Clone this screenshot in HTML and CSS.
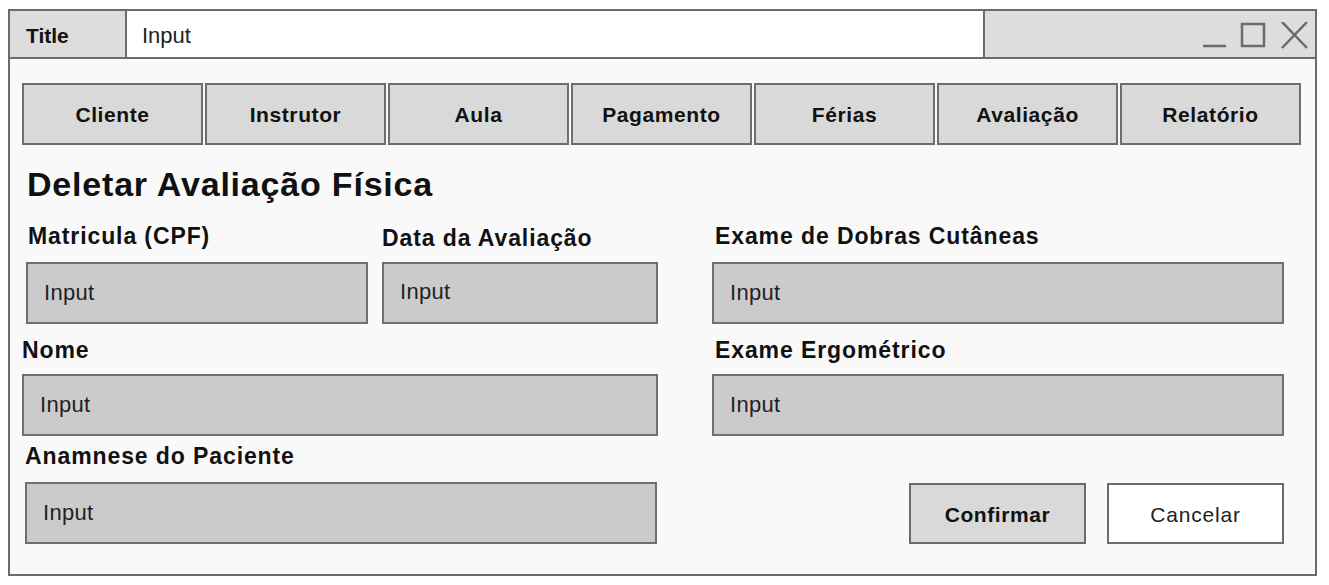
FILE: index.html
```html
<!DOCTYPE html>
<html lang="pt">
<head>
<meta charset="utf-8">
<title>Deletar Avaliação Física</title>
<link rel="stylesheet" href="styles.css">
</head>
<body>
<div class="window">
  <div class="titlebar">
    <div class="title-cell">Title</div>
    <div class="title-input">Input</div>
    <div class="title-controls">
      <svg class="controls-icon" width="110" height="30" viewBox="0 0 110 30">
        <line x1="3" y1="24" x2="26" y2="24" stroke="#6b6b6b" stroke-width="2.5"/>
        <rect x="42" y="2" width="22" height="22" fill="none" stroke="#6b6b6b" stroke-width="2.5"/>
        <line x1="82" y1="0" x2="107" y2="26" stroke="#6b6b6b" stroke-width="2.5"/>
        <line x1="107" y1="0" x2="82" y2="26" stroke="#6b6b6b" stroke-width="2.5"/>
      </svg>
    </div>
  </div>
  <div class="content">
    <nav class="tabs">
      <div class="tab">Cliente</div>
      <div class="tab">Instrutor</div>
      <div class="tab">Aula</div>
      <div class="tab">Pagamento</div>
      <div class="tab">Férias</div>
      <div class="tab">Avaliação</div>
      <div class="tab">Relatório</div>
    </nav>
    <h1 class="heading">Deletar Avaliação Física</h1>
    <div class="form">
      <div class="col-left">
        <div class="row-split">
          <div class="field field-cpf">
            <div class="label">Matricula (CPF)</div>
            <div class="box">Input</div>
          </div>
          <div class="field field-date">
            <div class="label label-low">Data da Avaliação</div>
            <div class="box box-date">Input</div>
          </div>
        </div>
        <div class="field field-nome">
          <div class="label">Nome</div>
          <div class="box">Input</div>
        </div>
        <div class="field field-anam">
          <div class="label">Anamnese do Paciente</div>
          <div class="box">Input</div>
        </div>
      </div>
      <div class="col-right">
        <div class="field">
          <div class="label label-right">Exame de Dobras Cutâneas</div>
          <div class="box">Input</div>
        </div>
        <div class="field field-ergo">
          <div class="label label-right">Exame Ergométrico</div>
          <div class="box">Input</div>
        </div>
        <div class="actions">
          <div class="btn btn-primary">Confirmar</div>
          <div class="btn btn-secondary">Cancelar</div>
        </div>
      </div>
    </div>
  </div>
</div>
</body>
</html>
```

FILE: styles.css
```css
* { box-sizing: border-box; }
html, body { margin: 0; padding: 0; background: #ffffff; }
body {
  font-family: "Liberation Sans", Arial, Helvetica, sans-serif;
  color: #111;
}
.window {
  margin: 9px 0 0 8px;
  width: 1309px;
  height: 567px;
  border: 2px solid #6b6b6b;
  background: #f9f9f9;
  display: flex;
  flex-direction: column;
}
.titlebar {
  height: 48px;
  border-bottom: 2px solid #6b6b6b;
  display: flex;
  flex: 0 0 auto;
}
.title-cell {
  width: 117px;
  background: #dddddd;
  border-right: 2px solid #6b6b6b;
  font-weight: bold;
  font-size: 21px;
  padding: 3px 0 0 16px;
  display: flex;
  align-items: center;
}
.title-input {
  width: 858px;
  background: #ffffff;
  border-right: 2px solid #6b6b6b;
  font-size: 22px;
  padding: 3px 0 0 15px;
  display: flex;
  align-items: center;
  color: #222;
}
.title-controls {
  flex: 1;
  background: #dddddd;
  display: flex;
  align-items: flex-start;
  justify-content: flex-end;
  padding: 11px 5px 0 0;
}
.controls-icon { display: block; }
.content {
  flex: 1;
  padding: 24px 12px 0 12px;
}
.tabs {
  display: flex;
  gap: 2px;
}
.tab {
  width: 181px;
  height: 62px;
  background: #d9d9d9;
  border: 2px solid #6e6e6e;
  display: flex;
  align-items: center;
  justify-content: center;
  font-weight: bold;
  font-size: 21px;
  letter-spacing: 0.6px;
  padding-top: 2px;
  color: #111;
}
.heading {
  margin: 22px 0 0 5px;
  font-size: 34px;
  line-height: 1;
  font-weight: bold;
  letter-spacing: 0.8px;
  color: #111;
}
.form {
  display: flex;
  margin-top: 23px;
}
.col-left {
  width: 636px;
  display: flex;
  flex-direction: column;
}
.col-right {
  width: 572px;
  margin-left: 54px;
  display: flex;
  flex-direction: column;
}
.row-split {
  display: flex;
}
.field { display: flex; flex-direction: column; }
.label {
  font-weight: bold;
  font-size: 23px;
  letter-spacing: 0.9px;
  line-height: 24px;
  height: 38px;
  color: #111;
  white-space: nowrap;
}
.box {
  height: 62px;
  background: #cbcbcb;
  border: 2px solid #6f6f6f;
  font-size: 22px;
  letter-spacing: 0.3px;
  color: #222;
  display: flex;
  align-items: center;
  padding-left: 16px;
}
.field-cpf { width: 342px; margin-left: 4px; }
.field-cpf .label { padding-left: 2px; }
.field-date { width: 276px; margin-left: 14px; }
.label-low { padding-top: 2px; }
.box-date { align-items: flex-start; padding-top: 15px; }
.field-nome { margin-top: 12px; }
.field-nome .label { padding-top: 2px; }
.field-anam { margin-top: 8px; margin-left: 3px; width: 632px; }
.label-right { padding-left: 3px; }
.field-ergo { margin-top: 12px; }
.field-ergo .label { padding-top: 2px; }
.actions {
  display: flex;
  justify-content: flex-end;
  gap: 21px;
  margin-top: 47px;
}
.btn {
  width: 177px;
  height: 61px;
  border: 2px solid #6b6b6b;
  display: flex;
  align-items: center;
  justify-content: center;
  font-size: 21px;
  padding-top: 2px;
  color: #111;
}
.btn-primary { background: #d9d9d9; font-weight: bold; letter-spacing: 0.6px; }
.btn-secondary { background: #ffffff; color: #222; letter-spacing: 0.8px; }
```
